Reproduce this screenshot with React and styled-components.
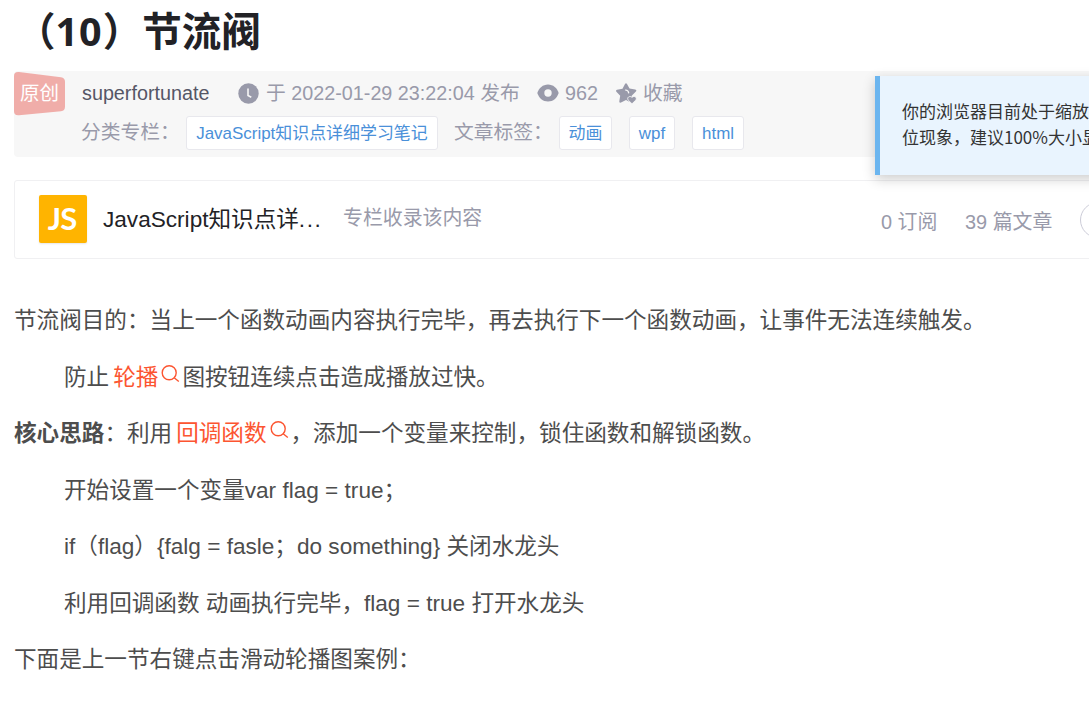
import React from "react";
import styled, { createGlobalStyle } from "styled-components";

const GlobalStyle = createGlobalStyle`
  html, body { margin: 0; background: #fff; }
  body {
    width: 1089px;
    height: 704px;
    overflow: hidden;
    font-family: "Liberation Sans", "Noto Sans CJK SC", sans-serif;
    text-spacing-trim: space-all;
  }
  * { box-sizing: border-box; }
  svg { display: block; flex: none; }
`;

const Page = styled.main`
  position: relative;
  width: 1089px;
  height: 704px;
  padding-left: 14px;
  overflow: hidden;
  white-space: nowrap;
`;

const Title = styled.h1`
  margin: 0;
  height: 71px;
  padding-left: 2px;
  font: 700 39.5px/57px "Noto Sans CJK SC", sans-serif;
  color: #222226;
`;

const TitleNumber = styled.span`
  font-family: "Open Sans", sans-serif;
  letter-spacing: 1px;
`;

const MetaPanel = styled.section`
  display: flex;
  height: 86px;
  background: #f7f7f7;
  border-radius: 4px 0 0 4px;
`;

const BadgeColumn = styled.div`
  flex: none;
  width: 68px;
`;

const Original = styled.div`
  position: relative;
  width: 51px;
  height: 44px;
  margin-top: 1px;

  svg { position: absolute; inset: 0; }
  span {
    position: relative;
    display: block;
    font-size: 19.5px;
    line-height: 43px;
    text-align: center;
    color: #fff;
  }
`;

const MetaRows = styled.div`
  flex: 1;
`;

const MetaRow = styled.div`
  display: flex;
  align-items: center;
  height: ${(p) => p.$height}px;
  font-size: 19.77px;
  color: #999aaa;
`;

const Author = styled.span`
  width: 156px;
  color: #555666;
`;

const Stat = styled.span`
  display: flex;
  align-items: center;
  flex: none;
  gap: ${(p) => p.$gap}px;
  width: ${(p) => p.$width}px;

  span { padding-bottom: ${(p) => p.$lift || 0}px; }
`;

const RowLabel = styled.span`
  flex: none;
  width: ${(p) => p.$width}px;
  margin-left: -1px;
  padding-bottom: 4px;
`;

const Tag = styled.a`
  flex: none;
  height: 34px;
  width: ${(p) => p.$width}px;
  margin-right: ${(p) => p.$after || 17}px;
  border: 1px solid #e8e8ed;
  border-radius: 3px;
  background: #fff;
  color: #4a90d9;
  font-size: 16.94px;
  line-height: 34px;
  text-align: center;
`;

const ColumnCard = styled.section`
  display: flex;
  align-items: center;
  width: 1200px;
  height: 79px;
  margin-top: 23px;
  padding-left: 24px;
  border: 1px solid #f0f0f2;
  border-radius: 3px;
  font-size: 19.9px;
  color: #999aaa;
`;

const Logo = styled.div`
  flex: none;
  width: 48px;
  height: 48px;
  margin: -2px 16px 0 0;
  padding-right: 2px;
  border-radius: 2px;
  background: #ffb400;
  box-shadow: 0 1px 2px rgba(0, 0, 0, 0.1);
  color: #fff;
  font: 700 31px/47px "Lato", sans-serif;
  letter-spacing: -1px;
  text-align: center;
`;

const ColumnName = styled.span`
  flex: none;
  width: 240px;
  padding-bottom: 4px;
  font-size: 22.6px;
  color: #222226;
`;

const Ellipsis = styled.span`
  letter-spacing: 1.6px;
`;

const ColumnHint = styled.span`
  flex: none;
  width: 538px;
  padding-bottom: 6px;
`;

const Count = styled.span`
  flex: none;
  width: ${(p) => p.$width}px;
  padding-top: 2px;
`;

const Subscribe = styled.span`
  flex: none;
  width: 90px;
  height: 36px;
  border: 1px solid #ccccd8;
  border-radius: 18px;
`;

const Article = styled.article`
  padding-top: 44.2px;
  font-size: 22.6px;
  color: #4d4d4d;
`;

const Paragraph = styled.p`
  margin: 0 0 19.8px;
  padding-left: ${(p) => (p.$indent ? 50 : 0)}px;
  height: 36.7px;
  line-height: 36.7px;
  white-space: pre;
`;

const Keyword = styled.a`
  display: inline-flex;
  height: 36px;
  margin: 0 2px 0 4px;
  vertical-align: top;
  color: #fc5531;

  svg { margin: 5px 0 0 3px; }
`;

const Notice = styled.aside`
  position: absolute;
  left: 875px;
  top: 76px;
  width: 320px;
  height: 99px;
  padding: 22px 0 0 22px;
  border-left: 5px solid #6bb5ef;
  background: #e9f4fe;
  box-shadow: 0 4px 12px rgba(0, 0, 0, 0.2);
  font: 17px/26px "Noto Sans CJK SC", sans-serif;
  color: #333;
`;

const ClockIcon = () => (
  <svg width="21" height="21" viewBox="0 0 21 21">
    <circle cx="10.5" cy="10.5" r="10.2" fill="#999aaa" />
    <path d="M10 5.500v7l3.300 1.800" fill="none" stroke="#f7f7f7" strokeWidth="1.600" />
  </svg>
);

const EyeIcon = () => (
  <svg width="22" height="18" viewBox="0 0 22 18">
    <path
      d="M11 .5C5.8.5 2 4 .3 9 2 14 5.8 17.5 11 17.5S20 14 21.700 9C20 4 16.200.5 11 .5Z"
      fill="#999aaa"
    />
    <circle cx="11" cy="9" r="3.700" fill="#f7f7f7" />
  </svg>
);

const StarIcon = () => (
  <svg width="21" height="21" viewBox="0 0 21 21">
    <path
      d="M9 1q1-1.500 2 0l2.500 4.600 5.700.9q1.900.6.700 2.100l-4.200 4.200.8 5.500q0 1.800-1.700 1.100L10 16.900l-5 2.700q-1.800.5-1.700-1.300l.9-5.500L.4 8.700Q-.6 7.200 1 6.700l5.500-.9Z"
      fill="#999aaa"
    />
    <path d="M9.500 7q2.900.3 3.200 2.900" fill="none" stroke="#f7f7f7" strokeWidth="1.200" strokeLinecap="round" />
    <path
      d="M16 20.800l-3.600-3.500c-2.200-2.500 1.200-5.200 3.600-3 2.400-2.200 5.800.5 3.600 3Z"
      fill="#999aaa"
      stroke="#f7f7f7"
      strokeWidth=".9"
    />
  </svg>
);

const SearchIcon = () => (
  <svg width="19" height="19" viewBox="0 0 19 19" fill="none" stroke="#fc5531" strokeWidth="1.400">
    <circle cx="8.200" cy="7.800" r="7" />
    <path d="M13.200 12.800l4.600 3.700" />
  </svg>
);

const Term = ({ children }) => (
  <Keyword>
    {children}
    <SearchIcon />
  </Keyword>
);

export default function App() {
  return (
    <Page>
      <GlobalStyle />
      <Title>（<TitleNumber>10</TitleNumber>）节流阀</Title>

      <MetaPanel>
        <BadgeColumn>
          <Original>
            <svg width="51" height="44" viewBox="0 0 51 44">
              <path
                d="M5 .1 47 5.200q4 .5 4 4.500v25q0 4-4 4.500L5 43.200q-5 .5-5-4V4Q0-.4 5 .1Z"
                fill="#f0ada9"
              />
            </svg>
            <span>原创</span>
          </Original>
        </BadgeColumn>
        <MetaRows>
          <MetaRow $height={44}>
            <Author>superfortunate</Author>
            <Stat $gap={7} $width={299} $lift={3}>
              <ClockIcon />
              <span>于 2022-01-29 23:22:04 发布</span>
            </Stat>
            <Stat $gap={6} $width={79}>
              <EyeIcon />
              <span>962</span>
            </Stat>
            <Stat $gap={6} $width={90} $lift={3}>
              <StarIcon />
              <span>收藏</span>
            </Stat>
          </MetaRow>
          <MetaRow $height={35}>
            <RowLabel $width={105}>分类专栏：</RowLabel>
            <Tag $width={252} $after={17}>JavaScript知识点详细学习笔记</Tag>
            <RowLabel $width={105}>文章标签：</RowLabel>
            <Tag $width={53}>动画</Tag>
            <Tag $width={46}>wpf</Tag>
            <Tag $width={52}>html</Tag>
          </MetaRow>
        </MetaRows>
      </MetaPanel>

      <ColumnCard>
        <Logo>JS</Logo>
        <ColumnName>JavaScript知识点详<Ellipsis>...</Ellipsis></ColumnName>
        <ColumnHint>专栏收录该内容</ColumnHint>
        <Count $width={84}>0 订阅</Count>
        <Count $width={115}>39 篇文章</Count>
        <Subscribe />
      </ColumnCard>

      <Article>
        <Paragraph>节流阀目的：当上一个函数动画内容执行完毕，再去执行下一个函数动画，让事件无法连续触发。</Paragraph>
        <Paragraph $indent>防止<Term>轮播</Term>图按钮连续点击造成播放过快。</Paragraph>
        <Paragraph><strong>核心思路</strong>：利用<Term>回调函数</Term>，添加一个变量来控制，锁住函数和解锁函数。</Paragraph>
        <Paragraph $indent>开始设置一个变量var flag = true；</Paragraph>
        <Paragraph $indent>if（flag）{"{"}falg = fasle；do something{"}"} 关闭水龙头</Paragraph>
        <Paragraph $indent>利用回调函数 动画执行完毕，flag = true 打开水龙头</Paragraph>
        <Paragraph>下面是上一节右键点击滑动轮播图案例：</Paragraph>
      </Article>

      <Notice>
        你的浏览器目前处于缩放状态，会导致错
        <br />
        位现象，建议100%大小显示
      </Notice>
    </Page>
  );
}
